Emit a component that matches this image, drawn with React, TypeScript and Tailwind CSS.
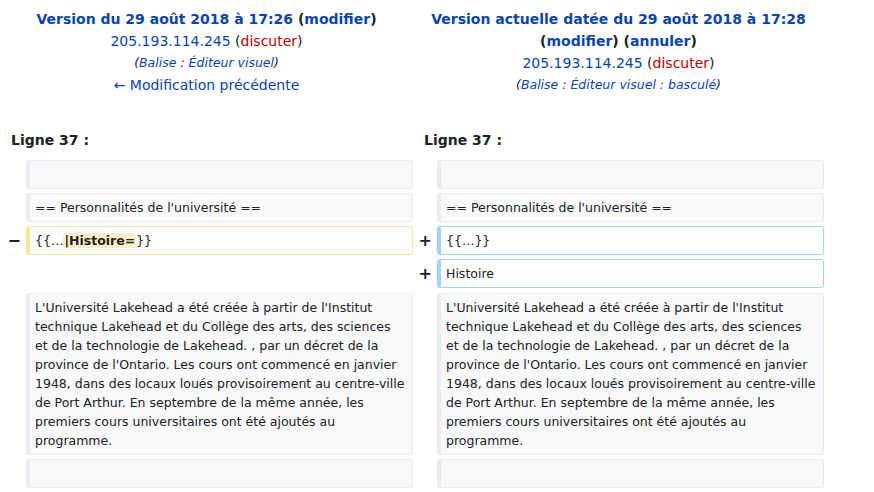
import React from "react";

const font = { fontFamily: '"DejaVu Sans", Verdana, sans-serif' };

function Link({ children, bold }: { children: React.ReactNode; bold?: boolean }) {
  return <span className={`text-[#0645ad] ${bold ? "font-bold" : ""}`}>{children}</span>;
}

function Red({ children }: { children: React.ReactNode }) {
  return <span className="text-[#ba0000]">{children}</span>;
}

type Kind = "context" | "deleted" | "added" | "empty";

function Cell({ kind, children }: { kind: Kind; children?: React.ReactNode }) {
  if (kind === "empty") return <div className="w-[387px]" />;
  const styles =
    kind === "context"
      ? "bg-[#f8f9fa] border-[#eaecf0]"
      : kind === "deleted"
        ? "bg-white border-[#ffe49c]"
        : "bg-white border-[#a3d3ff]";
  return (
    <div
      className={`w-[387px] min-h-[29px] rounded-[3px] border border-l-[4px] pl-[5px] pr-[6px] py-[4px] text-[12.5px] leading-[19px] text-[#202122] ${styles}`}
    >
      {children}
    </div>
  );
}

function Marker({ sign, wide }: { sign?: string; wide?: boolean }) {
  return (
    <div
      className={`${wide ? "w-[18px]" : "w-[16px]"} flex items-center justify-end pr-[1px] text-[16px] font-bold text-[#202122]`}
    >
      {sign}
    </div>
  );
}

function Row({
  left,
  right,
  leftSign,
  rightSign,
  className = "",
}: {
  left: { kind: Kind; text?: React.ReactNode };
  right: { kind: Kind; text?: React.ReactNode };
  leftSign?: string;
  rightSign?: string;
  className?: string;
}) {
  return (
    <div className={`flex gap-x-[4px] pl-[4px] ${className}`}>
      <Marker sign={leftSign} wide />
      <Cell kind={left.kind}>{left.text}</Cell>
      <Marker sign={rightSign} />
      <Cell kind={right.kind}>{right.text}</Cell>
    </div>
  );
}

const paragraph =
  "L'Université Lakehead a été créée à partir de l'Institut technique Lakehead et du Collège des arts, des sciences et de la technologie de Lakehead. , par un décret de la province de l'Ontario. Les cours ont commencé en janvier 1948, dans des locaux loués provisoirement au centre-ville de Port Arthur. En septembre de la même année, les premiers cours universitaires ont été ajoutés au programme.";

export default function App() {
  return (
    <div className="min-h-screen bg-white text-[#202122]" style={font}>
      <div className="flex pt-[8px] text-[14px] leading-[22px]">
        <div className="w-[413px] text-center">
          <div className="font-bold">
            <Link bold>Version du 29 août 2018 à 17:26</Link> (<Link bold>modifier</Link>)
          </div>
          <div>
            <Link>205.193.114.245</Link> (<Red>discuter</Red>)
          </div>
          <div className="italic text-[12.5px]">
            (<Link>Balise</Link> : <Link>Éditeur visuel</Link>)
          </div>
          <div>
            <Link>← Modification précédente</Link>
          </div>
        </div>
        <div className="w-[411px] text-center">
          <div className="font-bold">
            <Link bold>Version actuelle datée du 29 août 2018 à 17:28</Link>
          </div>
          <div className="font-bold">
            (<Link bold>modifier</Link>) (<Link bold>annuler</Link>)
          </div>
          <div>
            <Link>205.193.114.245</Link> (<Red>discuter</Red>)
          </div>
          <div className="italic text-[12.5px]">
            (<Link>Balise</Link> : <Link>Éditeur visuel : basculé</Link>)
          </div>
        </div>
      </div>

      <div className="flex mt-[33px] text-[14px] leading-[22px] font-bold">
        <div className="w-[413px] pl-[11px]">Ligne 37 :</div>
        <div className="w-[411px] pl-[11px]">Ligne 37 :</div>
      </div>

      <div className="mt-[9px] flex flex-col gap-y-[4px]">
        <Row left={{ kind: "context" }} right={{ kind: "context" }} />
        <Row
          left={{ kind: "context", text: "== Personnalités de l'université ==" }}
          right={{ kind: "context", text: "== Personnalités de l'université ==" }}
        />
        <Row
          leftSign="−"
          rightSign="+"
          left={{
            kind: "deleted",
            text: (
              <>
                {"{{…"}
                <span className="font-bold bg-[#feeec8] rounded-[3px] px-[1px]">|Histoire=</span>
                {"}}"}
              </>
            ),
          }}
          right={{ kind: "added", text: "{{…}}" }}
        />
        <Row rightSign="+" left={{ kind: "empty" }} right={{ kind: "added", text: "Histoire" }} />
        <Row
          className="mt-[1px]"
          left={{ kind: "context", text: paragraph }}
          right={{ kind: "context", text: paragraph }}
        />
        <Row left={{ kind: "context" }} right={{ kind: "context" }} />
      </div>
    </div>
  );
}
